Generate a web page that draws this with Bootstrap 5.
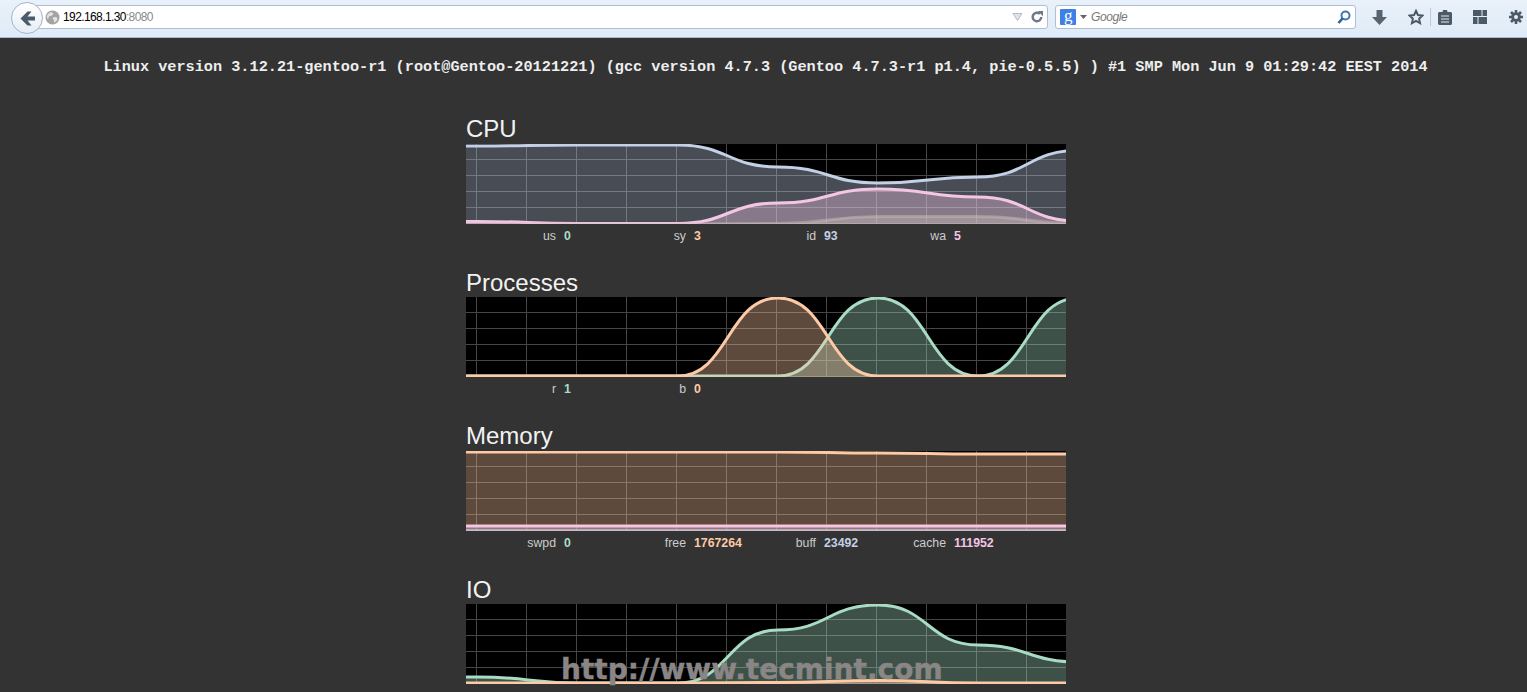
<!DOCTYPE html>
<html lang="en">
<head>
    <meta charset="UTF-8">
    <meta name="viewport" content="width=device-width, initial-scale=1.0">
    <title>Linux Dash</title>
    <link href="https://cdn.jsdelivr.net/npm/bootstrap@5.3.0/dist/css/bootstrap.min.css" rel="stylesheet">
    <style>
        html, body { height: 692px; overflow: hidden; }
        body { background: #333; color: #eee; font-family: "Liberation Sans", Arial, sans-serif; position: relative; }

        /* browser toolbar */
        .ff-bar { height: 38px; background: linear-gradient(#e9f1fa, #dfebf7); border-bottom: 1px solid #a9bdd2; padding: 5px 0 0 11px; }
        .ff-back { width: 32px; height: 32px; margin-top: -3px; border-radius: 50%; background: linear-gradient(#fff, #e6edf5); border: 1px solid #a5b4c6; z-index: 1; flex: none; }
        .ff-url { width: 1016px; height: 24px; margin-left: -11px; padding-left: 12px; background: #fff; border: 1px solid #aebfd2; border-radius: 0 3px 3px 0; font-size: 12px; letter-spacing: -.6px; color: #000; }
        .ff-globe { margin-right: 3px; }
        .ff-port { color: #8a8a8a; }
        .ff-search { width: 301px; height: 24px; margin-left: 7px; padding: 0 4px; background: #fff; border: 1px solid #aebfd2; border-radius: 3px; font-size: 12px; font-style: italic; letter-spacing: -.4px; color: #777; }
        .ff-g { width: 16px; height: 16px; background: #3f7fe8; color: #fff; font: 17px/13px "Liberation Serif", serif; text-align: center; border-radius: 1px; }
        .ff-tools { height: 24px; padding-left: 16px; }
        .ff-sep { width: 1px; height: 18px; background: #bccbdb; margin-left: 6px; }
        .ti-star { margin-left: 21px; }
        .ti-clip { margin-left: 7px; }
        .ti-tabs { margin-left: 21px; }
        .ti-gear { margin-left: 22px; }

        /* page */
        .kernel-line { font: bold 15.23px/1 "Liberation Mono", "Courier New", monospace; color: #eee; text-align: center; padding: 22px 0 0 4px; height: 78px; white-space: nowrap; }
        .dash-col { width: 600px; margin-left: 466px; }
        .dash-block { height: 153.5px; }
        .dash-title { font-size: 24px; line-height: 26px; margin: 0 0 1.9px; font-weight: 400; color: #f2f2f2; }
        .chart-box { display: block; width: 600px; height: 80px; background: #000; }
        .stat-row { font-size: 12.3px; line-height: 14px; margin-top: 5px; }
        .stat-cell { width: 130px; flex: none; }
        .stat-label { width: 90px; text-align: right; margin-right: 8px; color: #ccc; flex: none; }
        .stat-val { font-weight: 700; }
        .c-green { color: #a8dcc4; } .c-orange { color: #fdcaa5; } .c-blue { color: #c4d0e6; } .c-pink { color: #f4c6e4; }
        .mark-text { position: absolute; left: 561px; top: 651px; font-family: "DejaVu Sans", sans-serif; font-size: 28px; line-height: 38px; font-weight: 700; color: #8a8686; -webkit-text-stroke: .4px #8a8686; white-space: nowrap; }
    </style>
</head>
<body>

    <!-- Browser toolbar -->
    <div class="ff-bar d-flex align-items-start">
        <div class="ff-back d-flex align-items-center justify-content-center">
            <svg width="15" height="15" viewBox="0 0 15 15"><path d="M7.500.500.500 7.500l7 7h4l-4-5H15v-4H7.500l4-5z" fill="#4a5a6c"/></svg>
        </div>
        <div class="ff-url d-flex align-items-center">
            <svg width="15" height="15" viewBox="0 0 15 15" class="ff-globe"><circle cx="7.500" cy="7.500" r="7" fill="#a3a3a3"/><path d="M3 4c2-2 4-2 5-1s-1 3-3 3-1 3-2 3-2-3 0-5zm7 3c2 0 3 1 2 3s-3 3-3 2 0-2-1-3 0-2 2-2z" fill="#e2e2e2"/></svg>
            <span>192.168.1.30<span class="ff-port">:8080</span></span>
            <span class="ms-auto d-flex align-items-center gap-2 pe-1">
                <svg width="11" height="8" viewBox="0 0 11 8"><path d="M1 .500h9L5.500 7.500z" fill="#dfe4e9" stroke="#b4bcc5"/></svg>
                <svg width="12" height="12" viewBox="0 0 14 14"><path d="M12 7a5 5 0 1 1-1.600-3.700" fill="none" stroke="#6c7a88" stroke-width="2.800"/><path d="M8 0h6v6z" fill="#6c7a88"/></svg>
            </span>
        </div>
        <div class="ff-search d-flex align-items-center">
            <span class="ff-g">g</span>
            <svg width="7" height="4" viewBox="0 0 7 4" class="mx-1"><path d="M0 0h7L3.500 4z" fill="#666"/></svg>
            <span>Google</span>
            <svg width="14" height="15" viewBox="0 0 14 15" class="ms-auto"><circle cx="8.500" cy="5.500" r="4" fill="none" stroke="#3a78b5" stroke-width="2"/><path d="M5.500 8.500 1.500 13" stroke="#2d6299" stroke-width="2.600"/></svg>
        </div>
        <div class="ff-tools d-flex align-items-center">
            <svg width="15" height="15" viewBox="0 0 15 15"><path d="M4.500 0h6v7H15l-7.500 8L0 7h4.500z" fill="#566470"/></svg>
            <svg width="16" height="16" viewBox="0 0 18 18" class="ti-star"><path d="m9 2 2.200 4.800 5.200.6-3.900 3.500 1.100 5.100L9 13.400 4.400 16l1.100-5.100L1.600 7.400l5.200-.6z" fill="none" stroke="#4c5a67" stroke-width="2.200"/></svg>
            <span class="ff-sep"></span>
            <svg width="14" height="15" viewBox="0 0 14 15" class="ti-clip"><path d="M4.500 2 5 0h4l.5 2H13l1 1v11l-1 1H1l-1-1V3l1-1z" fill="#4c5a67"/><path d="M3 6h8M3 9h8M3 12h8" stroke="#dfe9f3" stroke-width="1.200"/></svg>
            <svg width="14" height="14" viewBox="0 0 14 14" class="ti-tabs"><path d="M0 0h8.500v6H0zM9.500 0H14v6H9.500zM0 7h4.500v7H0zM5.500 7H14v7H5.500z" fill="#4c5a67"/></svg>
            <svg width="14" height="14" viewBox="0 0 14 14" class="ti-gear"><path d="M7 0v14M0 7h14M2 2l10 10M12 2 2 12" stroke="#4c5a67" stroke-width="2.600"/><circle cx="7" cy="7" r="4.800" fill="#4c5a67"/><circle cx="7" cy="7" r="2" fill="#e4eef8"/></svg>
        </div>
    </div>

    <p class="kernel-line mb-0">Linux version 3.12.21-gentoo-r1 (root@Gentoo-20121221) (gcc version 4.7.3 (Gentoo 4.7.3-r1 p1.4, pie-0.5.5) ) #1 SMP Mon Jun 9 01:29:42 EEST 2014</p>

    <div class="dash-col">
        <section class="dash-block">
            <h2 class="dash-title">CPU</h2>
            <svg class="chart-box" id="chartCpu" viewBox="0 0 600 80"></svg>
            <div class="stat-row d-flex">
                <div class="stat-cell d-flex"><span class="stat-label">us</span><span class="stat-val c-green">0</span></div>
                <div class="stat-cell d-flex"><span class="stat-label">sy</span><span class="stat-val c-orange">3</span></div>
                <div class="stat-cell d-flex"><span class="stat-label">id</span><span class="stat-val c-blue">93</span></div>
                <div class="stat-cell d-flex"><span class="stat-label">wa</span><span class="stat-val c-pink">5</span></div>
            </div>
        </section>

        <section class="dash-block">
            <h2 class="dash-title">Processes</h2>
            <svg class="chart-box" id="chartProc" viewBox="0 0 600 80"></svg>
            <div class="stat-row d-flex">
                <div class="stat-cell d-flex"><span class="stat-label">r</span><span class="stat-val c-green">1</span></div>
                <div class="stat-cell d-flex"><span class="stat-label">b</span><span class="stat-val c-orange">0</span></div>
            </div>
        </section>

        <section class="dash-block">
            <h2 class="dash-title">Memory</h2>
            <svg class="chart-box" id="chartMem" viewBox="0 0 600 80"></svg>
            <div class="stat-row d-flex">
                <div class="stat-cell d-flex"><span class="stat-label">swpd</span><span class="stat-val c-green">0</span></div>
                <div class="stat-cell d-flex"><span class="stat-label">free</span><span class="stat-val c-orange">1767264</span></div>
                <div class="stat-cell d-flex"><span class="stat-label">buff</span><span class="stat-val c-blue">23492</span></div>
                <div class="stat-cell d-flex"><span class="stat-label">cache</span><span class="stat-val c-pink">111952</span></div>
            </div>
        </section>

        <section>
            <h2 class="dash-title">IO</h2>
            <svg class="chart-box" id="chartIo" viewBox="0 0 600 80"></svg>
        </section>
    </div>

    <div class="mark-text">http://www.tecmint.com</div>

    <script>
        const green = '#a8dcc4', orange = '#fdcaa5', blue = '#c4d0e6', pink = '#f4c6e4';

        // y of each series at x = -88, 12, 112 ... 612
        const charts = {
            chartCpu: [
                { color: blue, y: [2, 2, 1, 1, 23, 39, 33, 6.5] },
                { color: pink, y: [77, 77.5, 79.5, 79.5, 59, 45, 53, 77] },
                { color: '#cfc0b8', y: [80, 80, 80, 80, 79.5, 72.5, 72.5, 79.5], line: .45 }
            ],
            chartProc: [
                { color: green, y: [79, 79, 79, 79, 79, 1, 79, 1] },
                { color: orange, y: [79, 79, 79, 79, 1, 79, 79, 79] }
            ],
            chartMem: [
                { color: orange, y: [1, 1, 1, 1, 1, 2, 3, 3] },
                { color: blue, y: [79.5, 79.5, 79.5, 79.5, 79.5, 79.5, 79.5, 79.5], line: .6 },
                { color: pink, y: [75, 75, 75, 75, 75, 75, 75, 75] }
            ],
            chartIo: [
                { color: green, y: [73, 73, 79, 79, 26, 1, 41, 58] },
                { color: orange, y: [79, 79, 79, 79, 78.5, 76.5, 79, 79] }
            ]
        };

        function linePath(values) {
            let d = `M-88 ${values[0]}`;
            for (let i = 1; i < values.length; i++) {
                const x = -88 + i * 100;
                d += `C${x - 50} ${values[i - 1]} ${x - 50} ${values[i]} ${x} ${values[i]}`;
            }
            return d;
        }

        Object.keys(charts).forEach(function (id) {
            let html = '<g stroke="#464646">';
            for (let x = 10.5; x < 600; x += 50) {
                html += `<path d="M${x} 0V80"/>`;
            }
            for (let y = 15.5; y < 80; y += 16) {
                html += `<path d="M0 ${y}H600"/>`;
            }
            html += '</g>';
            charts[id].forEach(function (s) {
                const d = linePath(s.y);
                html += `<path d="${d}V80H-88z" fill="${s.color}" fill-opacity=".37"/>`;
                html += `<path d="${d}" fill="none" stroke="${s.color}" stroke-width="3" stroke-opacity="${s.line || 1}"/>`;
            });
            document.getElementById(id).innerHTML = html;
        });
    </script>
    <script src="https://cdn.jsdelivr.net/npm/bootstrap@5.3.0/dist/js/bootstrap.bundle.min.js"></script>
</body>
</html>
